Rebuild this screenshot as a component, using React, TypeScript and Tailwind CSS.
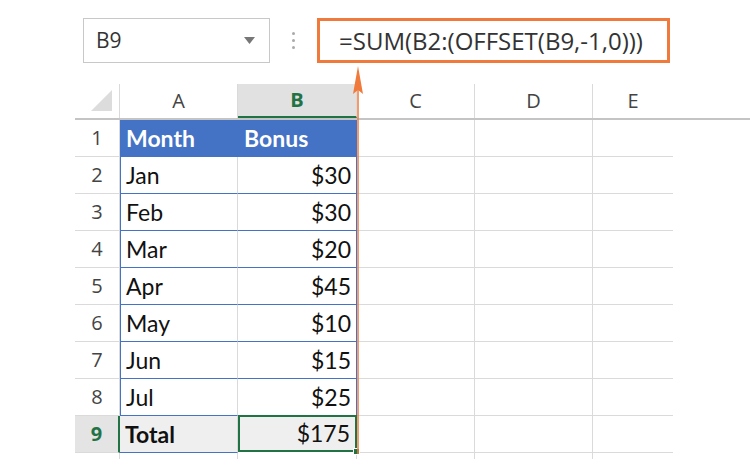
const rows = [
  { n: 2, a: "Jan", b: "$30" },
  { n: 3, a: "Feb", b: "$30" },
  { n: 4, a: "Mar", b: "$20" },
  { n: 5, a: "Apr", b: "$45" },
  { n: 6, a: "May", b: "$10" },
  { n: 7, a: "Jun", b: "$15" },
  { n: 8, a: "Jul", b: "$25" },
]

const grid = "border-r border-b border-[#dadada]"

function RowLabel({ n, active }: { n: number; active?: boolean }) {
  return (
    <div
      className={
        active
          ? "w-[45px] h-full flex items-center justify-center bg-[#e4e4e4] text-[#217346] font-bold border-b border-[#dadada] border-r-2 border-r-[#217346]"
          : `w-[45px] h-full flex items-center justify-center text-[#444] ${grid}`
      }
    >
      {n}
    </div>
  )
}

function Blank() {
  return (
    <>
      <div className={`w-[118px] h-full ${grid}`} />
      <div className={`w-[118px] h-full ${grid}`} />
      <div className="w-[80px] h-full border-b border-[#dadada]" />
    </>
  )
}

export default function App() {
  return (
    <div className="relative w-[750px] h-[469px] overflow-hidden bg-white font-['Open_Sans',sans-serif]">
      {/* formula bar */}
      <div className="flex items-center pl-[83px] pt-[18px]">
        <div className="w-[187px] h-[45px] border border-[#c8c8c8] flex items-center justify-between pl-[12px] pr-[14px] text-[21px] text-[#333]">
          <span>B9</span>
          <svg width="11" height="7" viewBox="0 0 11 7">
            <path d="M0 0 L11 0 L5.5 7 Z" fill="#777" />
          </svg>
        </div>
        <div className="w-[47px] flex flex-col items-center gap-[4px]">
          <span className="w-[3px] h-[3px] rounded-full bg-[#aaa]" />
          <span className="w-[3px] h-[3px] rounded-full bg-[#aaa]" />
          <span className="w-[3px] h-[3px] rounded-full bg-[#aaa]" />
        </div>
        <div className="w-[353px] h-[45px] border-[3px] border-[#f07a3c] flex items-center pl-[19px] text-[24px] text-[#333] whitespace-nowrap">
          =SUM(B2:(OFFSET(B9,-1,0)))
        </div>
      </div>

      {/* sheet */}
      <div className="ml-[75px] mt-[21px] text-[20px]">
        {/* column headers */}
        <div className="flex h-[36px] border-b-2 border-[#c4c4c4] text-[#444]">
          <div className="w-[45px] h-full border-r border-[#dadada] flex items-end justify-end pr-[7px] pb-[7px]">
            <svg width="21" height="21" viewBox="0 0 21 21">
              <path d="M21 0 L21 21 L0 21 Z" fill="#dcdcdc" />
            </svg>
          </div>
          <div className="w-[118px] h-full border-r border-[#dadada] flex items-center justify-center">A</div>
          <div className="w-[119px] h-full border-r border-[#dadada] bg-[#e1e1e1] border-b-2 border-b-[#217346] -mb-[2px] flex items-center justify-center text-[#217346] font-bold">
            B
          </div>
          <div className="w-[118px] h-full border-r border-[#dadada] flex items-center justify-center">C</div>
          <div className="w-[118px] h-full border-r border-[#dadada] flex items-center justify-center">D</div>
          <div className="w-[80px] h-full flex items-center justify-center">E</div>
        </div>

        {/* row 1 */}
        <div className="flex h-[37px] font-['Lato',sans-serif] text-[23px]">
          <div className="w-[45px] h-full flex items-center justify-center text-[#444] font-['Open_Sans',sans-serif] text-[20px] border-r border-b border-[#dadada]">
            1
          </div>
          <div className="w-[237px] h-full bg-[#4472c4] flex items-center text-white font-bold">
            <span className="w-[118px] pl-[6px]">Month</span>
            <span className="pl-[6px]">Bonus</span>
          </div>
          <Blank />
        </div>

        {/* rows 2-8 */}
        {rows.map((r) => (
          <div key={r.n} className="flex h-[37px]">
            <RowLabel n={r.n} />
            <div className="w-[118px] h-full flex items-center pl-[5px] border-l border-[#4472c4] border-b border-b-[#4472c4] border-r border-r-[#dadada] font-['Lato',sans-serif] text-[23px] text-[#111]">
              {r.a}
            </div>
            <div className="w-[119px] h-full flex items-center justify-end pr-[5px] border-b border-r border-[#4472c4] font-['Lato',sans-serif] text-[23px] text-[#111]">
              {r.b}
            </div>
            <Blank />
          </div>
        ))}

        {/* row 9 */}
        <div className="flex h-[37px]">
          <RowLabel n={9} active />
          <div className="w-[118px] h-full flex items-center pl-[5px] bg-[#efefef] border-b border-[#4472c4] border-r border-r-[#dadada] font-['Lato',sans-serif] text-[23px] font-bold text-[#111]">
            Total
          </div>
          <div className="relative w-[119px] h-full flex items-center justify-end pr-[5px] bg-[#efefef] border-2 border-[#217346] -mt-[1px] font-['Lato',sans-serif] text-[23px] text-[#111]">
            $175
            <span className="absolute -right-[5px] -bottom-[5px] w-[7px] h-[7px] bg-[#217346] border border-white" />
          </div>
          <Blank />
        </div>

        {/* partial row */}
        <div className="flex h-[6px]">
          <div className="w-[45px] h-full border-r border-[#dadada]" />
          <div className="w-[118px] h-full border-r border-[#dadada]" />
          <div className="w-[119px] h-full border-r border-[#dadada]" />
          <div className="w-[118px] h-full border-r border-[#dadada]" />
          <div className="w-[118px] h-full border-r border-[#dadada]" />
        </div>
      </div>

      {/* orange arrow from formula to B9 */}
      <svg className="absolute left-[350px] top-[64px]" width="16" height="392" viewBox="0 0 16 392">
        <path d="M8 2 L13 30 L8 26 L3 30 Z" fill="#f07a3c" />
        <line x1="8" y1="20" x2="8" y2="390" stroke="#f07a3c" strokeWidth="1.5" />
      </svg>
    </div>
  )
}
